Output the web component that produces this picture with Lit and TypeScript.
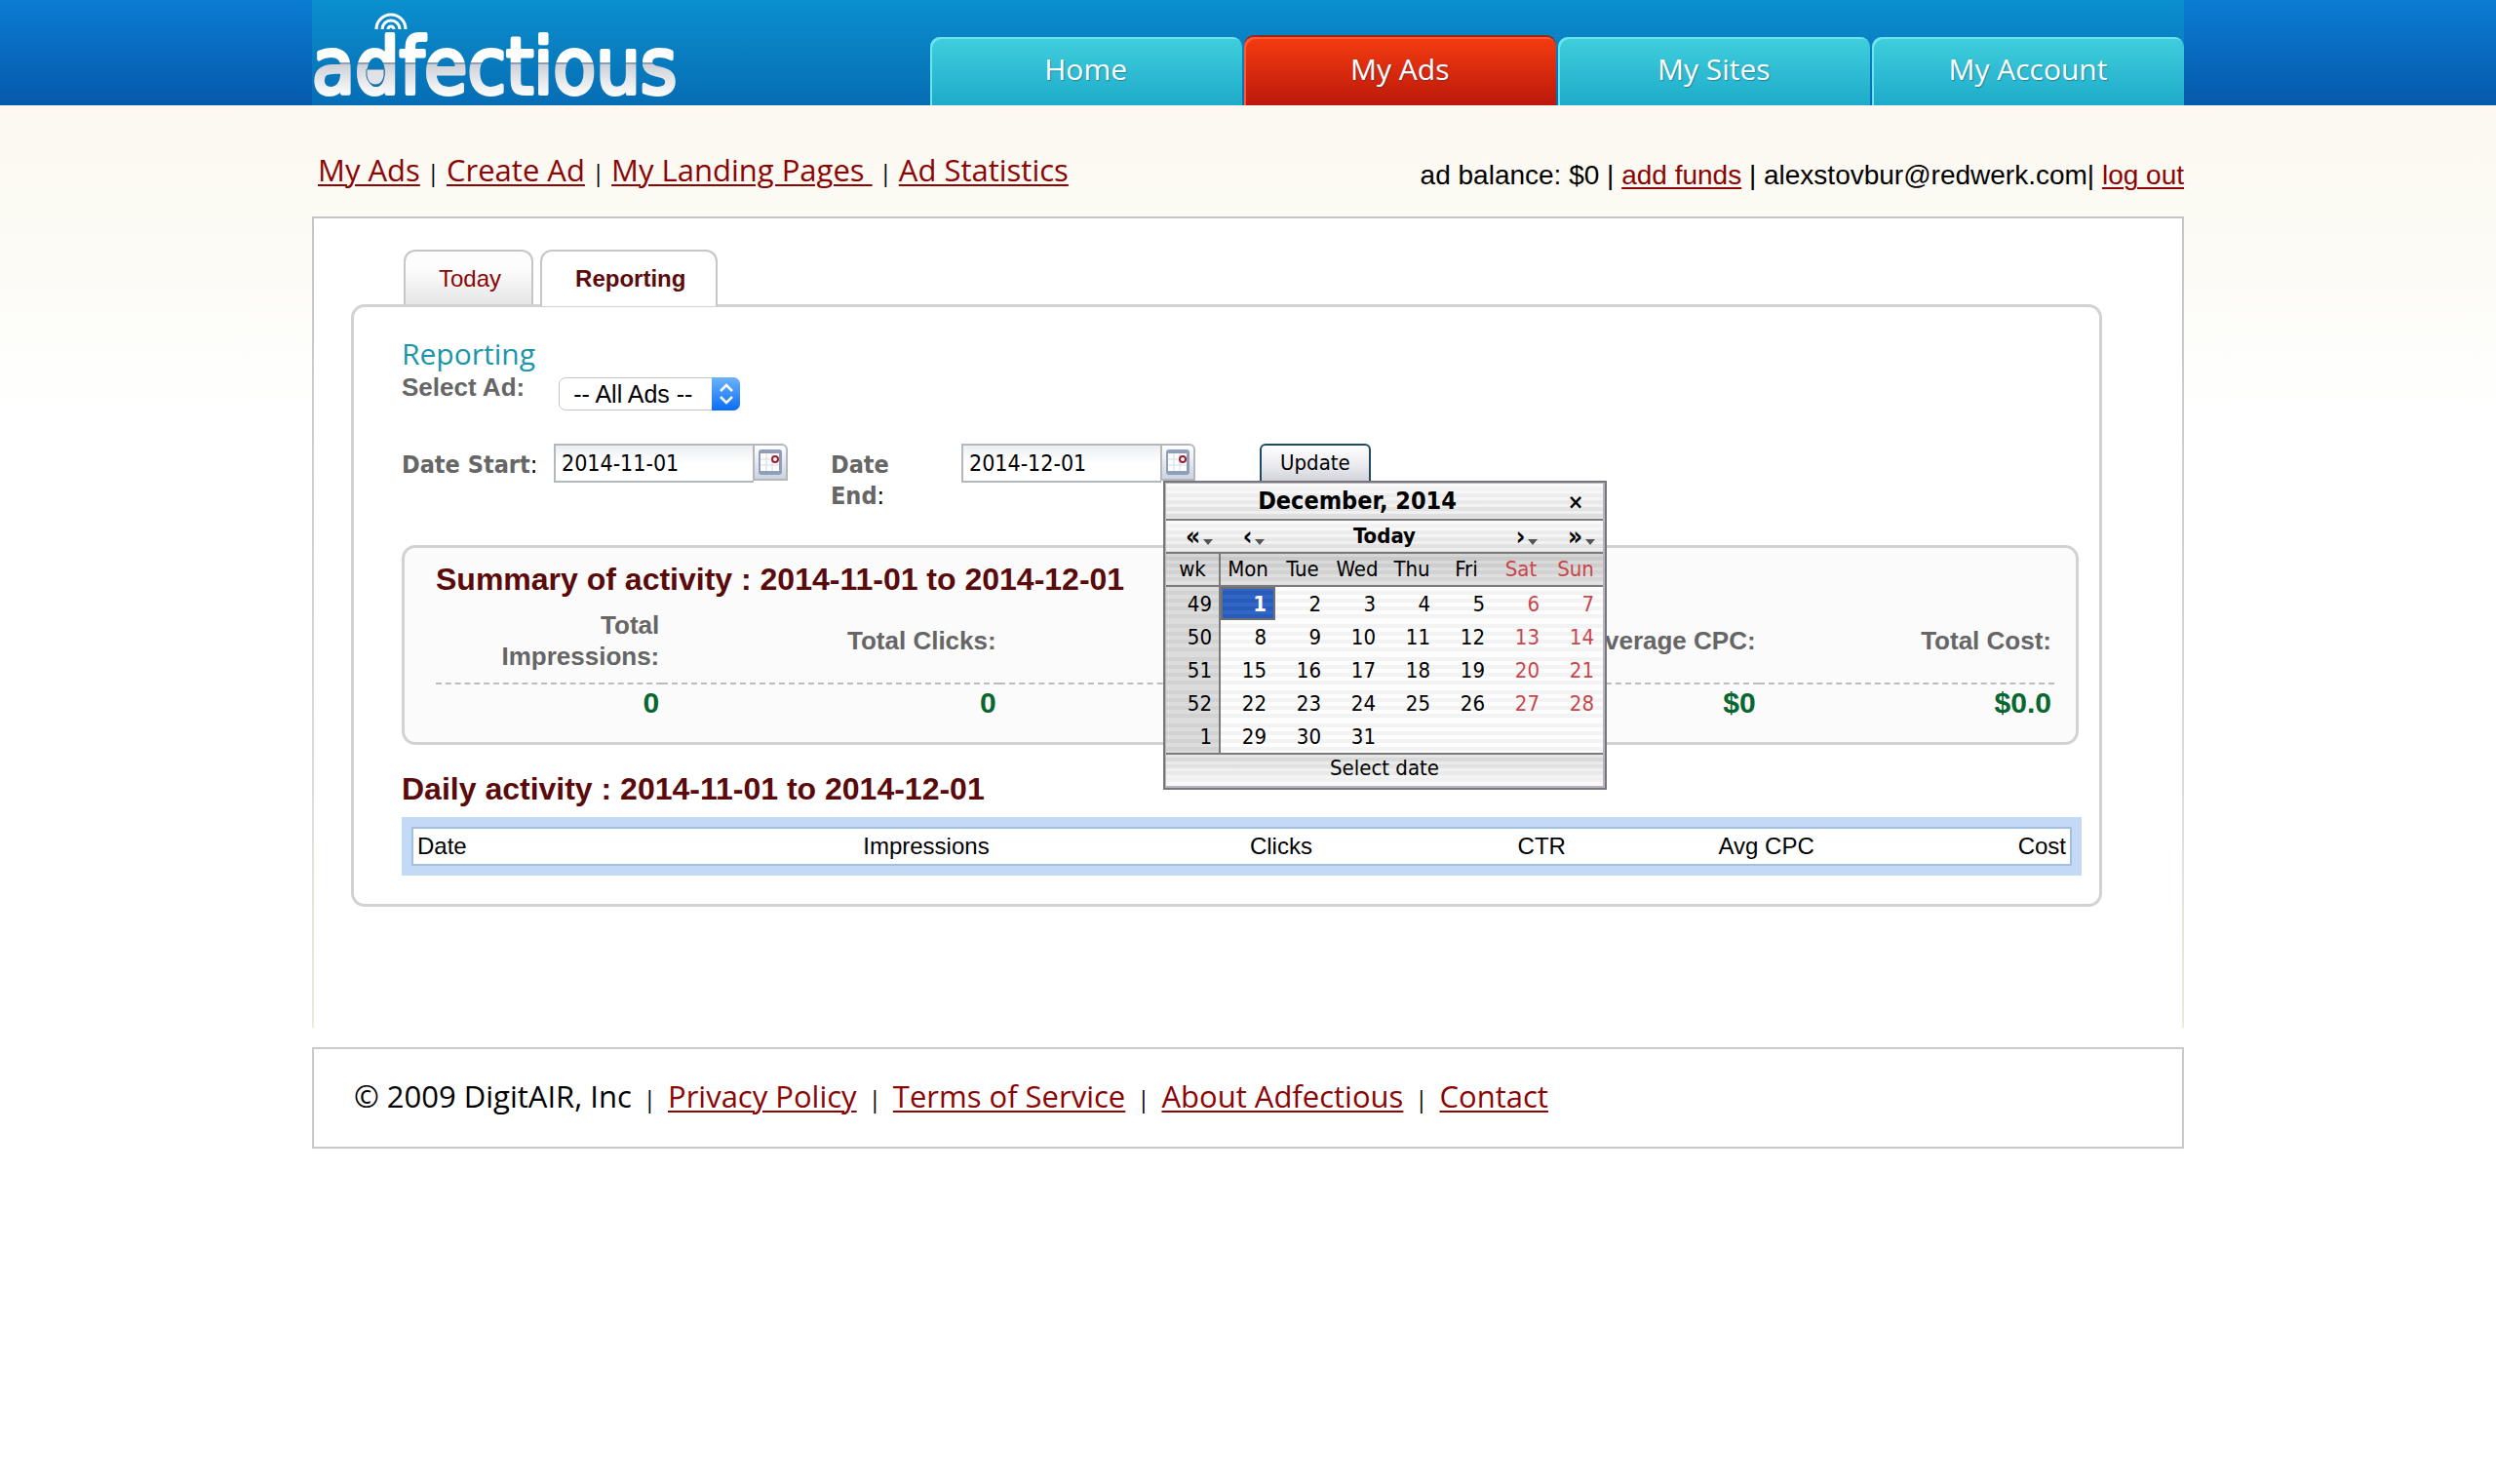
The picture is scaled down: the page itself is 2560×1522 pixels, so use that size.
import { LitElement, html, svg, css } from "lit";
import { customElement, state } from "lit/decorators.js";

const WEEKS: { wk: number; days: (number | null)[] }[] = [
  { wk: 49, days: [1, 2, 3, 4, 5, 6, 7] },
  { wk: 50, days: [8, 9, 10, 11, 12, 13, 14] },
  { wk: 51, days: [15, 16, 17, 18, 19, 20, 21] },
  { wk: 52, days: [22, 23, 24, 25, 26, 27, 28] },
  { wk: 1, days: [29, 30, 31, null, null, null, null] },
];
const DAY_NAMES = ["Mon", "Tue", "Wed", "Thu", "Fri", "Sat", "Sun"];

@customElement("date-popup")
export class DatePopup extends LitElement {
  @state() private selected = 1;

  static styles = css`
    :host {
      display: block;
      font-family: "DejaVu Sans Condensed", "DejaVu Sans", sans-serif;
      font-size: 22px;
      color: #000;
    }
    .popup {
      border: 2px solid #77777b;
      box-shadow: inset -2px -2px 0 #b9b4be, inset 1px 1px 0 #b9b4be;
      background: #f4f4f4;
      padding: 1px 2px 2px 1px;
    }
    table {
      border-collapse: separate;
      border-spacing: 0;
      table-layout: fixed;
      width: 100%;
      line-height: 30px;
    }
    th, td { padding: 0; font-weight: 400; }
    .bar th {
      background:
        repeating-linear-gradient(rgba(255, 255, 255, 0.5) 0 3px, rgba(255, 255, 255, 0) 3px 7px),
        linear-gradient(#f6f6f6, #dcdcdc);
      border-bottom: 2px solid #7b7b7b;
    }
    .title th { height: 36px; font-weight: 700; font-size: 25px; }
    .nav th { height: 32px; font-weight: 700; }
    .names th {
      height: 32px;
      line-height: 32px;
      background:
        repeating-linear-gradient(rgba(255, 255, 255, 0.25) 0 3px, rgba(255, 255, 255, 0) 3px 7px),
        linear-gradient(#c6c6c6, #dadada);
      border-bottom: 2px solid #7b7b7b;
    }
    .names th:first-child, .wk { border-right: 2px solid #7b7b7b; }
    .wk {
      background: repeating-linear-gradient(#dcdcdc 0 4px, #d2d2d2 4px 8px);
      text-align: right;
      padding-right: 7px;
      padding-top: 2px;
    }
    .day { text-align: right; height: 34px; background: repeating-linear-gradient(#fdfdfd 0 4px, #f3f3f3 4px 8px); }
    .off { color: #c8474c; }
    .foot td {
      text-align: center;
      vertical-align: top;
      height: 32px;
      line-height: 28px;
      border-top: 2px solid #7b7b7b;
      background:
        repeating-linear-gradient(rgba(255, 255, 255, 0.4) 0 3px, rgba(255, 255, 255, 0) 3px 7px),
        linear-gradient(#d4d4d4, #f8f8f8);
    }
    button {
      all: unset;
      box-sizing: border-box;
      cursor: pointer;
      width: 100%;
      text-align: center;
    }
    .day button { display: block; height: 34px; line-height: 36px; padding-right: 9px; text-align: right; }
    .day button.on {
      background: repeating-linear-gradient(#2f66c8 0 4px, #285cb8 4px 8px);
      color: #fff;
      font-weight: 700;
      box-shadow: inset 0 0 0 2px #6a6f78;
    }
    .pager {
      display: flex;
      align-items: center;
      justify-content: center;
      gap: 3px;
      padding-left: 12px;
      height: 30px;
      font-size: 26px;
      line-height: 30px;
    }
    .pager svg { margin-top: 12px; }
    .close { font-size: 22px; }
  `;

  private pager(glyph: string, label: string) {
    return html`<th>
      <button class="pager" aria-label=${label}>${glyph}<svg width="10" height="6" viewBox="0 0 10 6" aria-hidden="true"><path d="M0 0h10L5 6z" fill="#555"/></svg></button>
    </th>`;
  }

  render() {
    return html`
      <div class="popup">
        <table>
          <colgroup><col><col><col><col><col><col><col><col></colgroup>
          <thead>
            <tr class="bar title">
              <th colspan="7">December, 2014</th>
              <th><button class="close" aria-label="Close">×</button></th>
            </tr>
            <tr class="bar nav">
              ${this.pager("«", "Previous year")}${this.pager("‹", "Previous month")}
              <th colspan="4"><button>Today</button></th>
              ${this.pager("›", "Next month")}${this.pager("»", "Next year")}
            </tr>
            <tr class="names">
              <th>wk</th>
              ${DAY_NAMES.map((d, i) => html`<th class=${i > 4 ? "off" : ""}>${d}</th>`)}
            </tr>
          </thead>
          <tbody>
            ${WEEKS.map(
              (w) => html`<tr>
                <td class="wk">${w.wk}</td>
                ${w.days.map(
                  (d, i) => html`<td class="day ${i > 4 ? "off" : ""}">
                    ${d === null
                      ? ""
                      : html`<button class=${d === this.selected ? "on" : ""} @click=${() => (this.selected = d)}>${d}</button>`}
                  </td>`
                )}
              </tr>`
            )}
          </tbody>
          <tfoot>
            <tr class="foot"><td colspan="8">Select date</td></tr>
          </tfoot>
        </table>
      </div>
    `;
  }
}

const NAV = ["Home", "My Ads", "My Sites", "My Account"];
const SUB = ["My Ads", "Create Ad", "My Landing Pages\u00a0", "Ad Statistics"];
const FOOT = ["Privacy Policy", "Terms of Service", "About Adfectious", "Contact"];
const SUMMARY = [
  { label: "Total Impressions:", value: "0", share: 232 },
  { label: "Total Clicks:", value: "0", share: 345 },
  { label: "Average CTR:", value: "0.0%", share: 390 },
  { label: "Average CPC:", value: "$0", share: 388 },
  { label: "Total Cost:", value: "$0.0", share: 303 },
];
const DAILY = [
  { label: "Date", share: 150 },
  { label: "Impressions", share: 200 },
  { label: "Clicks", share: 195 },
  { label: "CTR", share: 153 },
  { label: "Avg CPC", share: 150 },
  { label: "Cost", share: 152 },
];

const calendarIcon = svg`<svg width="26" height="28" viewBox="0 0 26 28" aria-hidden="true">
  <rect x="1" y="1" width="24" height="26" rx="3" fill="#8f9fba"/>
  <rect x="3" y="5" width="19" height="18" fill="#fff"/>
  <path d="M3 11h19M3 17h19M9 5v18M15 5v18" stroke="#d3dae6" stroke-width="1"/>
  <circle cx="18" cy="11" r="3" fill="#fff" stroke="#a01c2c" stroke-width="2"/>
</svg>`;

@customElement("app-root")
export class AppRoot extends LitElement {
  @state() private activeNav = "My Ads";

  static styles = css`
    :host {
      display: block;
      min-height: 100vh;
      background: #fff;
      font-family: "Liberation Sans", Arial, sans-serif;
      color: #000;
    }
    * { box-sizing: border-box; }
    .wrap { width: 75%; margin: 0 auto; }
    a { color: #8b0505; text-decoration: underline; text-underline-offset: 3px; text-decoration-thickness: 2px; }
    .top { background: linear-gradient(#0a7cd2, #0659ab); }
    .top .wrap {
      height: 108px;
      background: linear-gradient(#0b8fce, #066db4);
      display: flex;
      justify-content: space-between;
      align-items: flex-end;
    }
    .logo { display: block; align-self: flex-start; height: 108px; }
    .tabs { display: flex; gap: 2px; width: 67%; }
    .tabs a {
      flex: 1;
      height: 70px;
      border-radius: 10px 10px 0 0;
      background: linear-gradient(#40cfdc, #1eaaca);
      box-shadow: inset 2px 2px 0 #6be4ef;
      color: #fff;
      text-decoration: none;
      text-align: center;
      font: 30px/66px "Open Sans", sans-serif;
      text-shadow: 1px 1px 1px rgba(0, 60, 90, 0.4);
    }
    .tabs a.on {
      background: linear-gradient(#f53c10, #bb180b);
      box-shadow: inset 2px 2px 0 #ff5a35, 0 -2px 0 #9e2415;
    }
    .sky { background: linear-gradient(#fdf9f2, #fbfaf3 110px, #fff 320px); }
    .sub { display: flex; justify-content: space-between; align-items: flex-start; height: 114px; padding-top: 45px; }
    .links { display: flex; align-items: baseline; gap: 7px; padding-left: 6px; font: 31px/42px "Open Sans", sans-serif; }
    .links i, .foot i { font-size: 24px; }
    .account { font-size: 28px; line-height: 54px; }
    .box {
      border: 2px solid #c4c4ca;
      border-image: linear-gradient(#c4c4ca, #d4d4d6 50%, #eee9dd) 1;
      border-bottom: 0;
      background: #fff;
      padding: 32px 82px 124px 38px;
    }
    .subtabs { display: flex; gap: 7px; padding-left: 54px; }
    .subtabs a {
      height: 56px;
      padding: 0 31px 0 34px;
      border: 2px solid #c6c6c9;
      border-bottom: 0;
      border-radius: 12px 12px 0 0;
      background: linear-gradient(#fdfdfd 30%, #e6e6e6);
      font-size: 24px;
      line-height: 56px;
      text-decoration: none;
    }
    .subtabs a.on { font-weight: 700; color: #5c0b0b; background: #fff; height: 58px; margin-bottom: -2px; z-index: 1; }
    .panel { border: 3px solid #d2d2d2; border-radius: 14px; padding: 30px 18px 29px 49px; }
    h1 { margin: 0; font: 400 30px/36px "Open Sans", sans-serif; color: #1a95a8; }
    .pick { display: flex; gap: 35px; height: 74px; }
    .pick label { font-size: 26px; line-height: 32px; font-weight: 700; color: #666; }
    .select { position: relative; height: 34px; margin-top: 6px; }
    .select select {
      appearance: none;
      height: 34px;
      width: 186px;
      border: 1px solid #c4c4c4;
      border-radius: 7px;
      background: #fff;
      padding: 0 14px;
      font: 25px "Liberation Sans", sans-serif;
      color: #000;
    }
    .select svg { position: absolute; right: 0; top: 0; pointer-events: none; }
    .dates {
      display: flex;
      align-items: flex-start;
      height: 104px;
      font-family: "DejaVu Sans Condensed", "DejaVu Sans", sans-serif;
    }
    .dates label { font-size: 25px; line-height: 32px; padding-top: 6px; }
    .dates b { color: #666; }
    .start { width: 156px; }
    .end { width: 134px; }
    .field { display: flex; align-items: flex-start; position: relative; }
    .field input {
      width: 205px;
      height: 40px;
      border: 2px solid #b3b8be;
      border-right-width: 1px;
      border-radius: 0;
      background: linear-gradient(#eceef0, #fff 50%);
      padding: 0 6px;
      font: 23px "DejaVu Sans Condensed", "DejaVu Sans", sans-serif;
    }
    .trigger {
      width: 35px;
      height: 38px;
      border: 2px solid #b3b8be;
      border-left-width: 1px;
      border-radius: 0 6px 0 0;
      background: linear-gradient(#fff, #ccd4e0);
      padding: 0;
      display: grid;
      place-items: center;
    }
    .gap-a { margin-right: 44px; }
    .gap-b { margin-right: 66px; }
    .update {
      height: 46px;
      border: 2px solid #1f4a66;
      border-radius: 6px;
      background: linear-gradient(#fff, #e9e9ef 50%, #c9c9d2);
      padding: 0 19px 8px;
      font: 22px "DejaVu Sans Condensed", "DejaVu Sans", sans-serif;
      color: #000;
    }
    date-popup { position: absolute; left: 207px; top: 38px; width: 455px; z-index: 5; }
    .summary { border: 3px solid #d2d2d2; border-radius: 14px; background: #fbfbfb; padding: 14px 22px 12px 32px; margin-right: 3px; height: 205px; }
    h2 { margin: 0; font-size: 32px; line-height: 36px; color: #5a0a0a; }
    .sum { width: 100%; border-collapse: separate; border-spacing: 0; table-layout: fixed; }
    .sum th { height: 90px; padding: 2px 3px 0 60px; text-align: right; font-size: 26px; line-height: 32px; color: #666; border-bottom: 2px dashed #bdbdbd; }
    .sum td { padding: 0 3px; text-align: right; font-size: 30px; line-height: 38px; font-weight: 700; color: #06672f; }
    .daily { margin-top: 27px; }
    .grid { border: 10px solid #c3d9f6; margin-top: 11px; background: #fff; }
    .grid table { width: 100%; border: 2px solid #a3bfe2; border-collapse: separate; border-spacing: 0; table-layout: fixed; }
    .grid th { font-size: 24px; line-height: 36px; font-weight: 400; text-align: right; padding: 0 4px; }
    .grid th:first-child { text-align: left; }
    .foot {
      margin-top: 20px;
      border: 2px solid #cacaca;
      height: 104px;
      padding: 28px 0 0 41px;
      display: flex;
      align-items: baseline;
      gap: 12px;
      font: 31px/40px "Open Sans", sans-serif;
    }
    i { font-style: normal; }
  `;

  private logo() {
    return svg`<svg class="logo" width="400" height="108" viewBox="0 0 400 108" role="img" aria-label="adfectious">
      <defs>
        <linearGradient id="metal" gradientUnits="userSpaceOnUse" x1="0" y1="0" x2="0" y2="100">
          <stop offset="0" stop-color="#fff"/>
          <stop offset=".64" stop-color="#fff"/>
          <stop offset=".64" stop-color="#8fa0b0"/>
          <stop offset=".66" stop-color="#8fa0b0"/>
          <stop offset=".66" stop-color="#cdd1d7"/>
          <stop offset="1" stop-color="#fff"/>
        </linearGradient>
      </defs>
      <text x="0" y="96" font-family="'DejaVu Sans Condensed', 'DejaVu Sans', sans-serif" font-size="80" fill="url(#metal)" stroke="url(#metal)" stroke-width="4" stroke-linejoin="round">adfectious</text>
      <g fill="none" stroke="#fff" stroke-width="3">
        <path d="M66 30a15 15 0 0 1 30 0"/>
        <path d="M72 30a9 9 0 0 1 18 0"/>
        <path d="M78 30a3 3 0 0 1 6 0"/>
      </g>
      <path d="M56 71h18v7q-2 9-9 9t-9-9z" fill="#dfe3e8" stroke="#2d6c9d" stroke-width="1"/>
    </svg>`;
  }

  private cols(rows: { share: number }[]) {
    const total = rows.reduce((sum, r) => sum + r.share, 0);
    return rows.map((r) => html`<col style="width:${(r.share / total) * 100}%">`);
  }

  render() {
    return html`
      <header class="top">
        <div class="wrap">
          ${this.logo()}
          <nav class="tabs">
            ${NAV.map((n) => html`<a href="#" class=${n === this.activeNav ? "on" : ""}>${n}</a>`)}
          </nav>
        </div>
      </header>
      <div class="sky">
        <main class="wrap">
          <div class="sub">
            <nav class="links">
              ${SUB.map((s, i) => html`${i ? html`<i>|</i>` : ""}<a href="#">${s}</a>`)}
            </nav>
            <div class="account">ad balance: $0 | <a href="#">add funds</a> | alexstovbur@redwerk.com| <a href="#">log out</a></div>
          </div>
          <div class="box">
            <nav class="subtabs"><a href="#">Today</a><a href="#" class="on">Reporting</a></nav>
            <section class="panel">
              <h1>Reporting</h1>
              <div class="pick">
                <label for="ad">Select Ad:</label>
                <div class="select">
                  <select id="ad"><option>-- All Ads --</option></select>
                  <svg width="29" height="34" viewBox="0 0 29 34" aria-hidden="true">
                    <defs><linearGradient id="blue" x2="0" y2="1"><stop stop-color="#6cb3fa"/><stop offset="1" stop-color="#0a6cf5"/></linearGradient></defs>
                    <path d="M0 0h22a7 7 0 0 1 7 7v20a7 7 0 0 1-7 7H0z" fill="url(#blue)"/>
                    <path d="M9 14l6-6 6 6M9 20l6 6 6-6" fill="none" stroke="#fff" stroke-width="2.5"/>
                  </svg>
                </div>
              </div>
              <div class="dates">
                <label class="start" for="from"><b>Date Start</b>:</label>
                <div class="field gap-a">
                  <input id="from" type="text" value="2014-11-01">
                  <button class="trigger" aria-label="Choose start date">${calendarIcon}</button>
                </div>
                <label class="end" for="to"><b>Date<br>End</b>:</label>
                <div class="field gap-b">
                  <input id="to" type="text" value="2014-12-01">
                  <button class="trigger" aria-label="Choose end date">${calendarIcon}</button>
                  <date-popup></date-popup>
                </div>
                <button class="update">Update</button>
              </div>
              <div class="summary">
                <h2>Summary of activity : 2014-11-01 to 2014-12-01</h2>
                <table class="sum">
                  <colgroup>${this.cols(SUMMARY)}</colgroup>
                  <thead><tr>${SUMMARY.map((s) => html`<th>${s.label}</th>`)}</tr></thead>
                  <tbody><tr>${SUMMARY.map((s) => html`<td>${s.value}</td>`)}</tr></tbody>
                </table>
              </div>
              <h2 class="daily">Daily activity : 2014-11-01 to 2014-12-01</h2>
              <div class="grid">
                <table>
                  <colgroup>${this.cols(DAILY)}</colgroup>
                  <thead><tr>${DAILY.map((d) => html`<th>${d.label}</th>`)}</tr></thead>
                </table>
              </div>
            </section>
          </div>
        </main>
      </div>
      <footer class="wrap foot">
        <span>© 2009 DigitAIR, Inc</span>
        ${FOOT.map((f) => html`<i>|</i><a href="#">${f}</a>`)}
      </footer>
    `;
  }
}
